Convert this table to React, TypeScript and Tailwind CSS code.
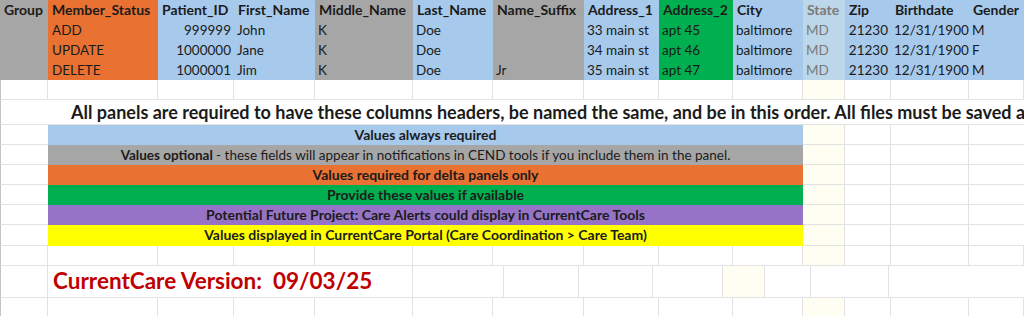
const font = "font-['Lato','Open_Sans',sans-serif]";

const GRAY = "bg-[#a6a6a6]";
const ORANGE = "bg-[#e97132]";
const BLUE = "bg-[#a6c9ec]";
const GREEN = "bg-[#00b050]";
const STATE = "bg-[#bcd6ea]";

type Col = {
  w: string;
  bg: string;
  head: string;
  right?: boolean;
  muted?: boolean;
};

const cols: Col[] = [
  { w: "w-[48px]", bg: GRAY, head: "Group" },
  { w: "w-[110px]", bg: ORANGE, head: "Member_Status" },
  { w: "w-[76px]", bg: BLUE, head: "Patient_ID", right: true },
  { w: "w-[81px]", bg: BLUE, head: "First_Name" },
  { w: "w-[98px]", bg: GRAY, head: "Middle_Name" },
  { w: "w-[80px]", bg: BLUE, head: "Last_Name" },
  { w: "w-[91px]", bg: GRAY, head: "Name_Suffix" },
  { w: "w-[75px]", bg: BLUE, head: "Address_1" },
  { w: "w-[74px]", bg: GREEN, head: "Address_2" },
  { w: "w-[70px]", bg: BLUE, head: "City" },
  { w: "w-[42px]", bg: STATE, head: "State", muted: true },
  { w: "w-[46px]", bg: BLUE, head: "Zip", right: true },
  { w: "w-[78px]", bg: BLUE, head: "Birthdate", right: true },
  { w: "flex-1", bg: BLUE, head: "Gender" },
];

const rows = [
  ["", "ADD", "999999", "John", "K", "Doe", "", "33 main st", "apt 45", "baltimore", "MD", "21230", "12/31/1900", "M"],
  ["", "UPDATE", "1000000", "Jane", "K", "Doe", "", "34 main st", "apt 46", "baltimore", "MD", "21230", "12/31/1900", "F"],
  ["", "DELETE", "1000001", "Jim", "K", "Doe", "Jr", "35 main st", "apt 47", "baltimore", "MD", "21230", "12/31/1900", "M"],
];

const legend = [
  { bg: "bg-[#a6c9ec]", size: "text-[14px]", text: <>Values always required</> },
  {
    bg: "bg-[#a6a6a6]",
    size: "text-[13.5px]",
    text: (
      <>
        Values optional{" "}
        <span className="font-normal">
          - these fields will appear in notifications in CEND tools if you include them in the panel.
        </span>
      </>
    ),
  },
  { bg: "bg-[#e97132]", size: "text-[14px]", text: <>Values required for delta panels only</> },
  { bg: "bg-[#00b050]", size: "text-[14px]", text: <>Provide these values if available</> },
  { bg: "bg-[#9673c6]", size: "text-[14px]", text: <>Potential Future Project: Care Alerts could display in CurrentCare Tools</> },
  { bg: "bg-[#ffff00]", size: "text-[14px]", text: <>Values displayed in CurrentCare Portal (Care Coordination &gt; Care Team)</> },
];

const line = "border-[#e2e2e2]";

function BlankRow({ h = "h-[20px]" }: { h?: string }) {
  return (
    <div className={`flex ${h}`}>
      {cols.map((c, i) => (
        <div
          key={i}
          className={`${c.w} shrink-0 border-b border-r ${line} ${i === 0 ? "border-l border-l-[#c4c4c4]" : ""} ${
            i === 10 ? "bg-[#fffef3]" : "bg-white"
          }`}
        />
      ))}
    </div>
  );
}

function TailCells() {
  return (
    <>
      <div className={`w-[42px] shrink-0 border-b border-r ${line} bg-[#fffef3]`} />
      <div className={`w-[46px] shrink-0 border-b border-r ${line}`} />
      <div className={`w-[78px] shrink-0 border-b border-r ${line}`} />
      <div className={`flex-1 border-b ${line}`} />
    </>
  );
}

export default function App() {
  return (
    <div className={`w-[1024px] h-[316px] overflow-hidden bg-white text-[#1b1b1b] ${font}`}>
      {/* header block */}
      <div className="flex h-[20px]">
        {cols.map((c, i) => (
          <div
            key={i}
            className={`${c.w} shrink-0 ${c.bg} px-[4px] text-[14px] font-bold leading-[20px] whitespace-nowrap overflow-hidden ${
              c.muted ? "text-[#7a7a7a]" : ""
            }`}
          >
            {c.head}
          </div>
        ))}
      </div>
      {rows.map((r, ri) => (
        <div key={ri} className="flex h-[20px]">
          {cols.map((c, i) => (
            <div
              key={i}
              className={`${c.w} shrink-0 ${c.bg} px-[3px] text-[13.5px] leading-[20px] whitespace-nowrap overflow-hidden ${
                c.right ? "text-right" : ""
              } ${c.muted ? "text-[#7a7a7a]" : ""} ${i === 1 ? "pl-[4px]" : ""}`}
            >
              {r[i]}
            </div>
          ))}
        </div>
      ))}

      <BlankRow />

      {/* note, runs past the window edge like the sheet */}
      <div className="flex h-[25px]">
        <div className={`flex-1 border-b border-l border-l-[#c4c4c4] ${line} pl-[70px] text-[18px] font-bold leading-[24px] whitespace-nowrap overflow-hidden`}>
          All panels are required to have these columns headers, be named the same, and be in this order. All files must be saved as .csv
        </div>
      </div>

      {/* legend */}
      {legend.map((l, i) => (
        <div key={i} className={`flex ${i === 5 ? "h-[21px]" : "h-[20px]"}`}>
          <div className={`w-[48px] shrink-0 border-b border-l border-l-[#c4c4c4] ${line}`} />
          <div className={`w-[755px] shrink-0 ${l.bg} text-center ${l.size} font-bold leading-[20px] whitespace-nowrap`}>
            {l.text}
          </div>
          <TailCells />
        </div>
      ))}

      <BlankRow h="h-[20px]" />

      {/* version */}
      <div className="flex h-[32px]">
        <div className={`w-[48px] shrink-0 border-b border-r border-l border-l-[#c4c4c4] ${line}`} />
        <div className={`w-[365px] shrink-0 border-b border-r ${line} pl-[5px] text-[22.5px] font-bold leading-[30px] text-[#c00000] whitespace-nowrap`}>
          CurrentCare Version:&nbsp; 09/03/25
        </div>
        <div className={`w-[91px] shrink-0 border-b border-r ${line}`} />
        <div className={`w-[75px] shrink-0 border-b border-r ${line}`} />
        <div className={`w-[74px] shrink-0 border-b border-r ${line}`} />
        <div className={`w-[70px] shrink-0 border-b border-r ${line}`} />
        <TailCells />
      </div>

      <BlankRow />
    </div>
  );
}
